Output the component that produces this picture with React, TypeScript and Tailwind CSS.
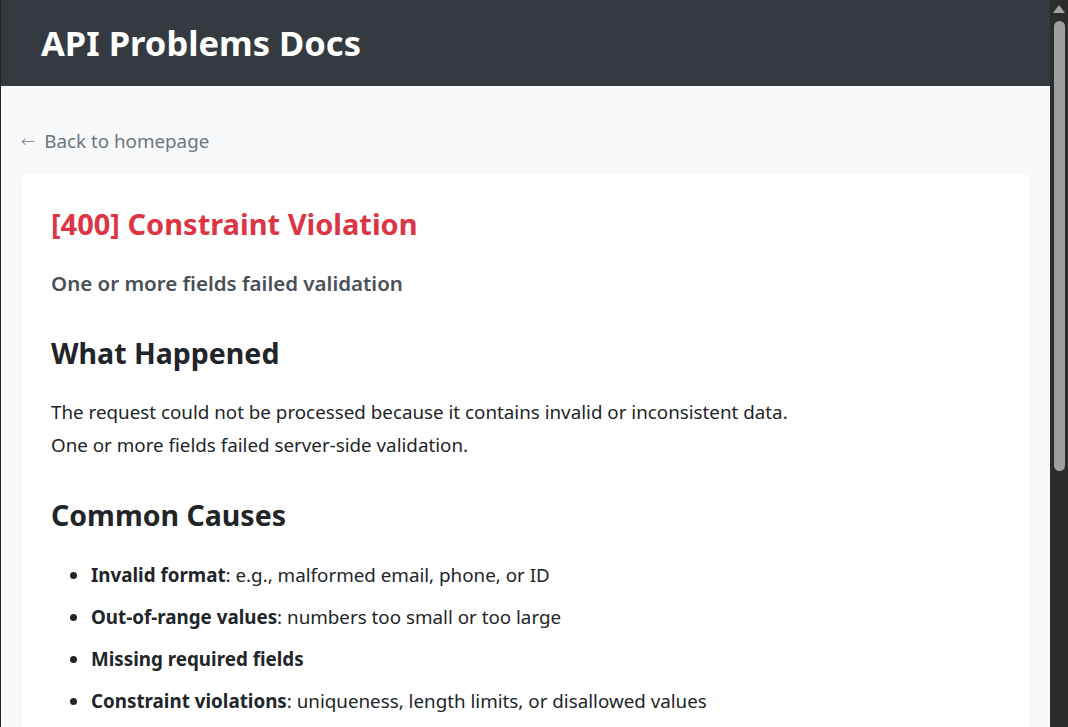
import React from "react";

const font = { fontFamily: '"Noto Sans", "Open Sans", sans-serif' };

function Scrollbar() {
  return (
    <div className="w-[18px] h-[727px] bg-[#2c2c2c] flex flex-col items-center shrink-0">
      <svg width="18" height="18" viewBox="0 0 18 18" className="shrink-0">
        <polygon points="3,13 9,5 15,13" fill="#a3a3a3" />
      </svg>
      <div className="w-[11px] h-[450px] mt-[3px] rounded-full bg-[#9f9f9f]" />
    </div>
  );
}

function Item({ children }: { children: React.ReactNode }) {
  return (
    <li className="flex items-center">
      <span className="w-[7px] h-[7px] rounded-full bg-[#212529] mr-[14px] shrink-0" />
      <span>{children}</span>
    </li>
  );
}

export default function App() {
  return (
    <div className="flex w-[1068px] h-[727px] overflow-hidden" style={font}>
      <div className="w-px bg-[#1f2125] shrink-0" />
      <div className="flex-1 flex flex-col bg-[#f8f9fa] overflow-hidden">
        <header className="h-[86px] bg-[#343a40] flex items-center pl-[40px] shrink-0">
          <h1 className="text-white font-bold text-[34.5px] leading-none">API Problems Docs</h1>
        </header>
        <div className="px-[20px] pt-[42px]">
          <a className="text-[#6c757d] text-[18.8px] leading-[26px] flex items-center">
            <span className="font-['DejaVu_Sans'] font-light text-[17px] mr-[9px]">←</span>
            <span>Back to homepage</span>
          </a>
          <div className="mt-[19px] bg-white rounded-[8px] shadow-[0_1px_4px_rgba(0,0,0,0.06)] px-[30px] pt-[34px] pb-[40px]">
            <h2 className="text-[#dc3545] font-bold text-[29px] leading-[34px]">[400] Constraint Violation</h2>
            <p className="mt-[27px] text-[#495057] font-semibold text-[20.5px] leading-[30px]">One or more fields failed validation</p>
            <h3 className="mt-[38px] text-[#212529] font-bold text-[28.5px] leading-[34px]">What Happened</h3>
            <p className="mt-[26px] text-[#212529] text-[18.8px] leading-[33px]">
              The request could not be processed because it contains invalid or inconsistent data.
              <br />
              One or more fields failed server-side validation.
            </p>
            <h3 className="mt-[36px] text-[#212529] font-bold text-[28.5px] leading-[34px]">Common Causes</h3>
            <ul className="mt-[27px] pl-[19px] text-[#212529] text-[18.8px] leading-[33px] flex flex-col gap-[9px]">
              <Item><strong className="font-bold">Invalid format</strong>: e.g., malformed email, phone, or ID</Item>
              <Item><strong className="font-bold">Out-of-range values</strong>: numbers too small or too large</Item>
              <Item><strong className="font-bold">Missing required fields</strong></Item>
              <Item><strong className="font-bold">Constraint violations</strong>: uniqueness, length limits, or disallowed values</Item>
            </ul>
          </div>
        </div>
      </div>
      <Scrollbar />
    </div>
  );
}
